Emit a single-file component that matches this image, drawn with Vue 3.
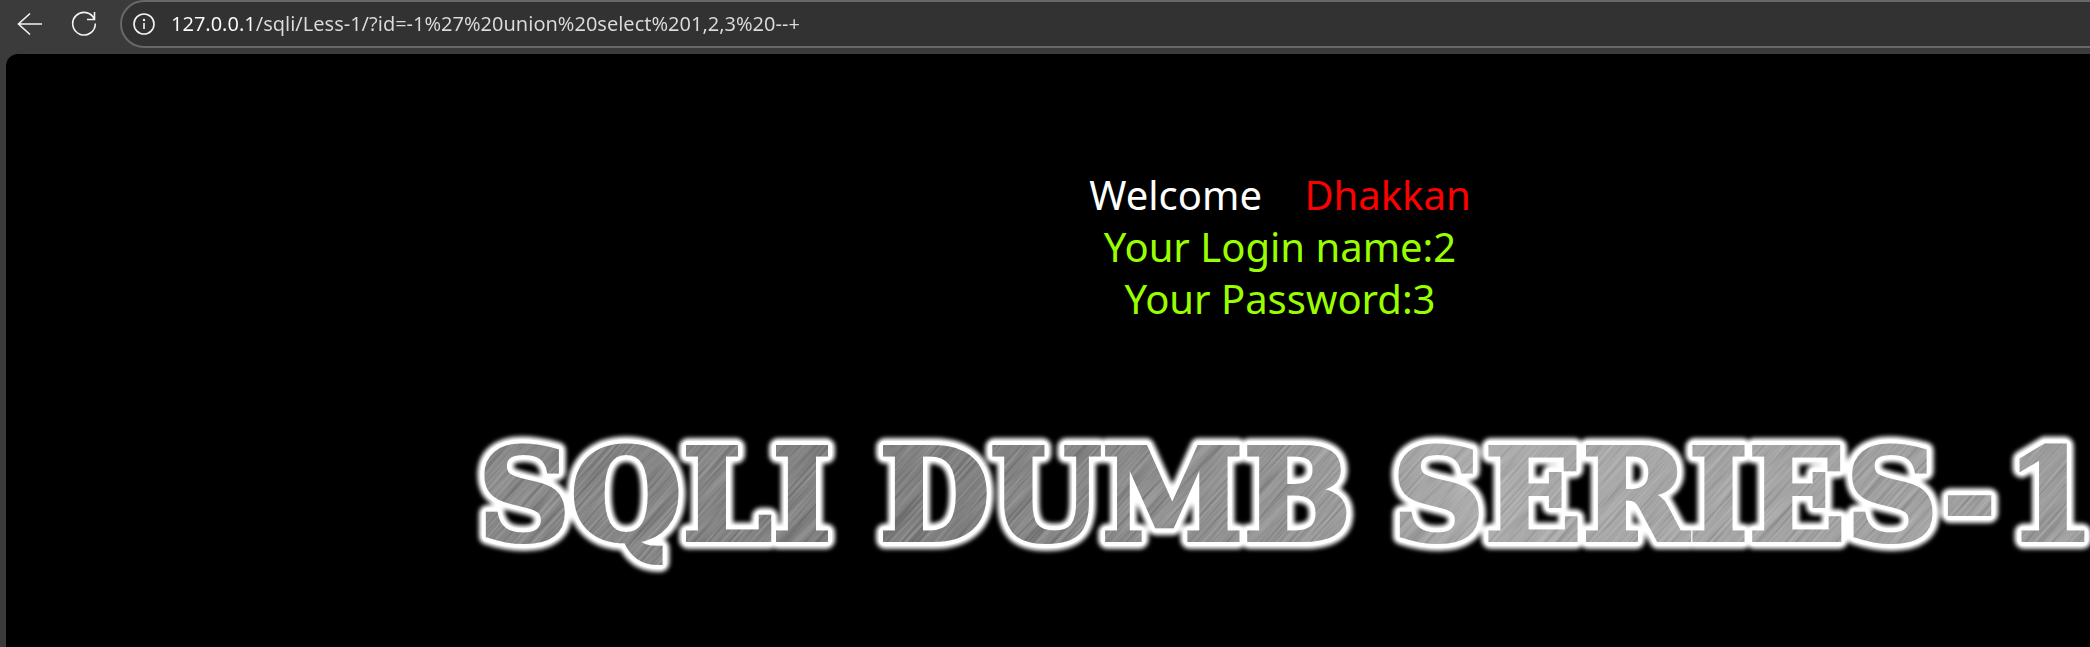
<script setup>
import { ref } from 'vue'

const address = ref('127.0.0.1/sqli/Less-1/?id=-1%27%20union%20select%201,2,3%20--+')
const titleWords = [
  { text: 'SQLI', x: 8 },
  { text: 'DUMB', x: 409 },
  { text: 'SERIES-', x: 922 },
  { text: '1', x: 1536 }
]
</script>

<template>
  <div class="browser">
    <header class="toolbar">
      <button class="tool" type="button" aria-label="Back">
        <svg width="26" height="24" viewBox="0 0 26 24">
          <path d="M25 12H1.5M13 1.5L1.5 12L13 22.500" />
        </svg>
      </button>
      <button class="tool" type="button" aria-label="Refresh">
        <svg width="26" height="26" viewBox="0 0 26 26">
          <path d="M23.500 8.500A11.300 11.300 0 1 0 24.300 12.500M23.500 1V8.500H16" />
        </svg>
      </button>
      <div class="address">
        <button class="info" type="button" aria-label="Site information">
          <svg width="22" height="22" viewBox="0 0 22 22">
            <circle cx="11" cy="11" r="10" />
            <path d="M11 10V16" />
            <circle class="dot" cx="11" cy="7" r="1.200" />
          </svg>
        </button>
        <input v-model="address" type="text" aria-label="Address" spellcheck="false" />
      </div>
    </header>

    <main class="page">
      <div class="message">
        <p class="welcome">Welcome <span class="name">Dhakkan</span></p>
        <p>Your Login name:2</p>
        <p>Your Password:3</p>
      </div>
      <h1 class="title">
        <svg class="banner" height="170">
          <defs>
            <text id="title-text" class="lettering" y="125">
              <tspan v-for="word in titleWords" :key="word.text" :x="word.x">{{ word.text }}</tspan>
            </text>
            <mask id="title-mask" maskUnits="userSpaceOnUse" x="0" y="0" width="100%" height="170">
              <use class="body" href="#title-text" />
            </mask>
            <linearGradient id="metal">
              <stop offset="0" stop-color="#8a8a8a" />
              <stop offset="0.300" stop-color="#808080" />
              <stop offset="0.500" stop-color="#959595" />
              <stop offset="0.620" stop-color="#acacac" />
              <stop offset="1" stop-color="#9c9c9c" />
            </linearGradient>
            <filter id="brushed" x="0" y="0" width="1" height="1" color-interpolation-filters="sRGB">
              <feTurbulence type="fractalNoise" baseFrequency="0.012 0.400" numOctaves="3" seed="4" />
              <feColorMatrix values="0.600 0 0 0 0.200  0.600 0 0 0 0.200  0.600 0 0 0 0.200  0 0 0 0 1" />
            </filter>
            <filter id="soften" x="-5%" y="-20%" width="110%" height="140%">
              <feGaussianBlur stdDeviation="2" />
            </filter>
          </defs>
          <use class="glow" href="#title-text" filter="url(#soften)" />
          <use class="rim" href="#title-text" />
          <g mask="url(#title-mask)">
            <rect width="100%" height="170" fill="url(#metal)" />
            <g class="grain" transform="rotate(-48 800 85)">
              <rect x="-100" y="-800" width="1800" height="1800" filter="url(#brushed)" />
            </g>
          </g>
        </svg>
      </h1>
    </main>
  </div>
</template>

<style>
html,
body {
  background: #3b3b3b;
}
</style>

<style scoped>
.browser {
  min-height: 100vh;
  display: flex;
  flex-direction: column;
  overflow: hidden;
  background: #3b3b3b;
  font-family: "Segoe UI", "Noto Sans", sans-serif;
}

.toolbar {
  display: flex;
  align-items: center;
  height: 48px;
  padding: 0 0 6px 16px;
}

button {
  display: flex;
  padding: 0;
  border: 0;
  background: none;
}

.tool {
  width: 28px;
  margin-right: 26px;
  justify-content: center;
}

.tool + .address {
  margin-left: -4px;
}

svg {
  display: block;
}

.tool svg,
.info svg {
  fill: none;
  stroke: #f4f4f4;
  stroke-width: 1.600;
}

.info .dot {
  fill: #f4f4f4;
  stroke: none;
}

.address {
  flex: 1;
  display: flex;
  align-items: center;
  gap: 16px;
  height: 48px;
  box-sizing: border-box;
  margin-right: -30px;
  padding-left: 11px;
  border: 2px solid #686868;
  border-radius: 24px;
  background: #323232;
}

.address input {
  flex: 1;
  min-width: 0;
  padding: 0;
  border: 0;
  outline: 0;
  font: 20px/28px "Segoe UI", "Noto Sans", sans-serif;
  color: transparent;
  background: linear-gradient(to right, #fff 84px, #dcdcdc 84px);
  background-clip: text;
}

.page {
  flex: 1;
  margin-left: 6px;
  padding: 115px 0 0 464px;
  border-top-left-radius: 12px;
  background: #000;
}

.message {
  text-align: center;
  font-size: 40px;
  line-height: 52px;
  color: #9f0;
}

p {
  margin: 0;
}

.welcome {
  color: #fff;
}

.name {
  margin-left: 32px;
  color: #f00;
}

.title {
  margin: 90px 0 0;
}

.banner {
  width: 100%;
}

.lettering {
  font: bold 128px "DejaVu Serif", serif;
}

.glow {
  fill: #fff;
  stroke: #fff;
  stroke-width: 18px;
  stroke-linejoin: round;
}

.rim {
  fill: #fff;
  stroke: #fff;
  stroke-width: 12px;
  stroke-linejoin: round;
}

.body {
  fill: #fff;
  stroke: #fff;
  stroke-width: 4px;
}

.grain {
  mix-blend-mode: soft-light;
}
</style>
